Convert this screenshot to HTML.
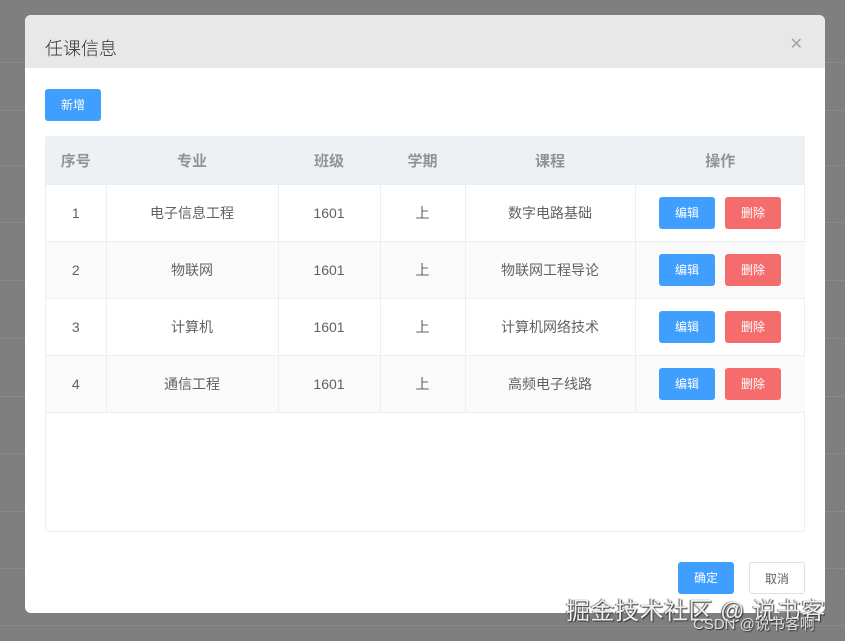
<!DOCTYPE html>
<html><head><meta charset="utf-8"><style>
*{margin:0;padding:0;box-sizing:border-box}
body{width:845px;height:641px;background:#7f7f7f;font-family:"Liberation Sans","Noto Sans CJK SC",sans-serif;position:relative;overflow:hidden}
.grid{position:absolute;left:0;right:0;height:1px;background:#8a8a8a}
.dlg{position:absolute;left:25px;top:15px;width:800px;height:598px;background:#fff;border-radius:6px;overflow:hidden}
.hd{height:53px;background:#e8e8e8;position:relative}
.hd span{position:absolute;left:20px;top:20px;font-size:18px;color:#303133;font-weight:300}
.x{position:absolute;right:22px;top:19px;font-size:16px;color:#a0a3a8}
.btn{position:absolute;height:32px;width:56px;border-radius:3px;font-size:12px;line-height:32px;text-align:center;color:#fff;background:#409eff}
.del{background:#f56c6c}
.tbl{position:absolute;left:20px;top:121px;width:760px;height:396px;border:1px solid #ebeef5;border-radius:3px}
table{border-collapse:collapse;width:759px}
td,th{border-right:1px solid #ebeef5;border-bottom:1px solid #ebeef5;text-align:center;font-size:14px;color:#606266;font-weight:normal;position:relative}
th{height:47px;background:#eef1f4;color:#909399;font-weight:bold;font-size:15px}
td{height:57px}
tr:nth-child(odd) td{background:#fafafa}
td:last-child,th:last-child{border-right:none}
.wm{position:absolute;left:566px;top:591px;font-size:24px;color:#eee;text-shadow:1px 1px 1px #333,-1px 0 1px #555;letter-spacing:0.5px}
.wm2{position:absolute;left:693px;top:613px;font-size:15px;color:#ddd;text-shadow:1px 1px 1px #333}
</style></head><body>
<div class="grid" style="top:62px"></div><div class="grid" style="top:110px"></div><div class="grid" style="top:165px"></div><div class="grid" style="top:222px"></div><div class="grid" style="top:280px"></div><div class="grid" style="top:338px"></div><div class="grid" style="top:396px"></div><div class="grid" style="top:453px"></div><div class="grid" style="top:511px"></div><div class="grid" style="top:568px"></div><div class="grid" style="top:625px"></div>
<div class="dlg">
<div class="hd"><span>任课信息</span><div class="x">✕</div></div>
<div class="btn" style="left:20px;top:74px;width:56px;height:32px">新增</div>
<div class="tbl"><table>
<tr><th style="width:60px">序号</th><th style="width:172px">专业</th><th style="width:102px">班级</th><th style="width:85px">学期</th><th style="width:170px">课程</th><th>操作</th></tr>
<tr><td>1</td><td>电子信息工程</td><td>1601</td><td>上</td><td>数字电路基础</td><td></td></tr>
<tr><td>2</td><td>物联网</td><td>1601</td><td>上</td><td>物联网工程导论</td><td></td></tr>
<tr><td>3</td><td>计算机</td><td>1601</td><td>上</td><td>计算机网络技术</td><td></td></tr>
<tr><td>4</td><td>通信工程</td><td>1601</td><td>上</td><td>高频电子线路</td><td></td></tr>
</table></div>
<div class="btn" style="left:634px;top:182px">编辑</div><div class="btn del" style="left:700px;top:182px">删除</div>
<div class="btn" style="left:634px;top:239px">编辑</div><div class="btn del" style="left:700px;top:239px">删除</div>
<div class="btn" style="left:634px;top:296px">编辑</div><div class="btn del" style="left:700px;top:296px">删除</div>
<div class="btn" style="left:634px;top:353px">编辑</div><div class="btn del" style="left:700px;top:353px">删除</div>
<div class="btn" style="left:653px;top:547px">确定</div>
<div class="btn" style="left:724px;top:547px;background:#fff;color:#606266;border:1px solid #dcdfe6">取消</div>
</div>
<div class="wm">掘金技术社区 @ 说书客</div>
<div class="wm2">CSDN @说书客啊</div>
</body></html>
